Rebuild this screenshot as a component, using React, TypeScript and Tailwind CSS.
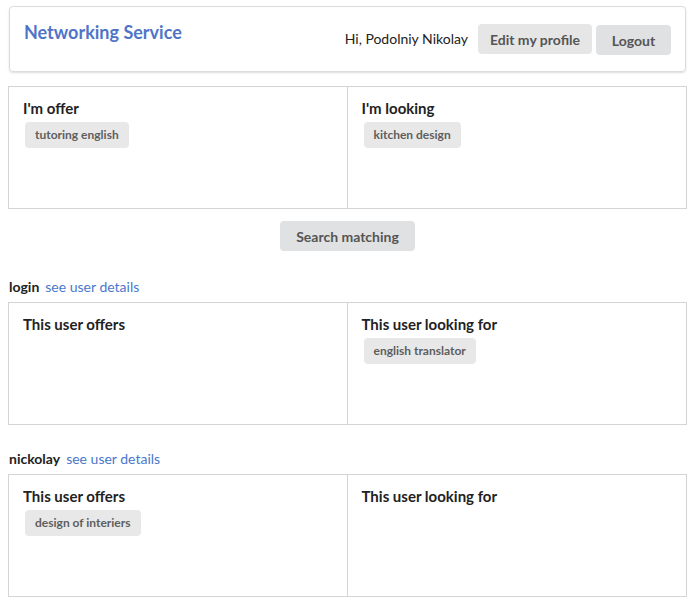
import React from "react";

function Tag({ children }: { children: React.ReactNode }) {
  return (
    <span className="inline-block ml-[2px] mt-[4px] rounded-[4px] bg-[#e8e8e8] px-[10px] py-[6px] text-[12px] font-bold leading-[14px] text-[#5e5e5e]">
      {children}
    </span>
  );
}

function Col({ title, tags, left }: { title: string; tags: string[]; left?: boolean }) {
  return (
    <div className={`px-[14px] pt-[11px] pb-[14px] ${left ? "border-r border-[#d4d4d5]" : ""}`}>
      <div className="text-[15px] font-bold leading-[20px] text-[#222]">{title}</div>
      <div className="flex flex-wrap">
        {tags.map((t) => (
          <Tag key={t}>{t}</Tag>
        ))}
      </div>
    </div>
  );
}

function Panel({ l, lt, r, rt }: { l: string; lt: string[]; r: string; rt: string[] }) {
  return (
    <div className="grid grid-cols-2 h-[123px] border border-[#d4d4d5] bg-white">
      <Col title={l} tags={lt} left />
      <Col title={r} tags={rt} />
    </div>
  );
}

function UserRow({ name }: { name: string }) {
  return (
    <div className="flex items-baseline gap-[6px] pl-[1px] text-[14px] leading-[18px] mb-[6px]">
      <span className="font-bold text-[#222]">{name}</span>
      <a className="text-[#4a78cc] cursor-pointer">see user details</a>
    </div>
  );
}

export default function App() {
  return (
    <div
      className="min-h-[603px] bg-white pl-[8px] pr-[3px] pt-[6px] pb-[6px] text-[#222]"
      style={{ fontFamily: "Lato, 'Open Sans', sans-serif" }}
    >
      <div className="ml-[1px] mr-[1px] flex h-[66px] items-center justify-between rounded-[4px] border border-[#dcdcde] pl-[14px] pr-[14px] shadow-[0_1px_2px_0_rgba(34,36,38,0.15)]">
        <div className="self-start mt-[13px] text-[18px] font-bold leading-[24px] text-[#4f74c8]">
          Networking Service
        </div>
        <div className="flex items-center">
          <span className="mr-[10px] text-[14px] leading-[18px] text-[#222]">Hi, Podolniy Nikolay</span>
          <button className="h-[30px] w-[114px] rounded-[4px] bg-[#e6e6e6] text-[14px] font-bold text-[#555]">
            Edit my profile
          </button>
          <button className="ml-[4px] mt-[2px] h-[30px] w-[75px] rounded-[4px] bg-[#e0e1e2] text-[14px] font-bold text-[#555]">
            Logout
          </button>
        </div>
      </div>

      <div className="mt-[14px]">
        <Panel l="I'm offer" lt={["tutoring english"]} r="I'm looking" rt={["kitchen design"]} />
      </div>

      <div className="flex justify-center mt-[12px] mb-[27px]">
        <button className="h-[30px] w-[135px] rounded-[4px] bg-[#e0e1e2] text-[14px] font-bold text-[#555]">
          Search matching
        </button>
      </div>

      <UserRow name="login" />
      <Panel l="This user offers" lt={[]} r="This user looking for" rt={["english translator"]} />

      <div className="mt-[25px]">
        <UserRow name="nickolay" />
      </div>
      <Panel l="This user offers" lt={["design of interiers"]} r="This user looking for" rt={[]} />
    </div>
  );
}
